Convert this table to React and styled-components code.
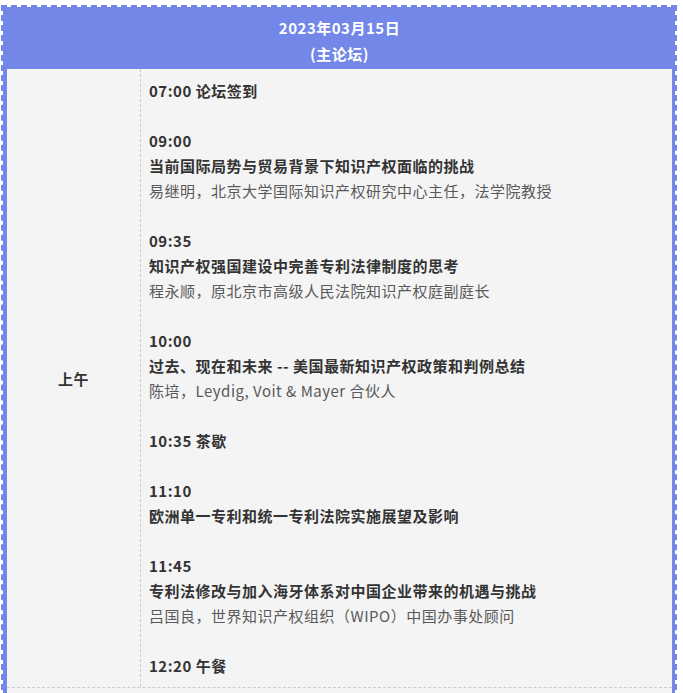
import React from 'react';
import styled, { createGlobalStyle } from 'styled-components';

const GlobalStyle = createGlobalStyle`
    body {
        margin: 0;
        background: #ffffff;
        font-family: "Noto Sans CJK SC", "Noto Sans", sans-serif;
    }
`;

const schedule = [
    { time: '07:00', title: '论坛签到', inline: true },
    { time: '09:00', title: '当前国际局势与贸易背景下知识产权面临的挑战', speaker: '易继明，北京大学国际知识产权研究中心主任，法学院教授' },
    { time: '09:35', title: '知识产权强国建设中完善专利法律制度的思考', speaker: '程永顺，原北京市高级人民法院知识产权庭副庭长' },
    { time: '10:00', title: '过去、现在和未来 -- 美国最新知识产权政策和判例总结', speaker: '陈培，Leydig, Voit & Mayer 合伙人' },
    { time: '10:35', title: '茶歇', inline: true },
    { time: '11:10', title: '欧洲单一专利和统一专利法院实施展望及影响' },
    { time: '11:45', title: '专利法修改与加入海牙体系对中国企业带来的机遇与挑战', speaker: '吕国良，世界知识产权组织（WIPO）中国办事处顾问' },
    { time: '12:20', title: '午餐', inline: true },
];

const App = () => {
    return (
        <>
            <GlobalStyle />
            <Frame>
                <Table>
                    <Header>
                        <HeaderLine>2023年03月15日</HeaderLine>
                        <HeaderLine>(主论坛)</HeaderLine>
                    </Header>
                    <Row>
                        <PeriodCell>上午</PeriodCell>
                        <AgendaCell>
                            {schedule.map((item, i) => (
                                <Block key={item.time} $last={i === schedule.length - 1}>
                                    {item.inline ? (
                                        <Line $bold>
                                            {item.time} {item.title}
                                        </Line>
                                    ) : (
                                        <>
                                            <Line $bold>{item.time}</Line>
                                            <Line $bold>{item.title}</Line>
                                            {item.speaker && <Line>{item.speaker}</Line>}
                                        </>
                                    )}
                                </Block>
                            ))}
                        </AgendaCell>
                    </Row>
                    <Spacer />
                </Table>
            </Frame>
        </>
    );
};

export default App;

const Frame = styled.div`
    margin: 5px 0 0 1px;
    width: 672px;
    border: 2px dashed #7287e8;
`;

const Table = styled.div`
    display: flex;
    flex-direction: column;
    background: #f4f4f4;
    border-left: 4px solid #7287e8;
    border-right: 3px solid #7287e8;
`;

const Header = styled.div`
    background: #7287e8;
    padding: 8px 0 2px;
    text-align: center;
`;

const HeaderLine = styled.div`
    color: #ffffff;
    font-size: 15px;
    font-weight: 700;
    line-height: 26px;
    letter-spacing: 0.5px;
`;

const Row = styled.div`
    display: flex;
    border-bottom: 1px dashed #cccccc;
`;

const PeriodCell = styled.div`
    width: 133px;
    flex: none;
    display: flex;
    align-items: center;
    justify-content: center;
    border-right: 1px dashed #cccccc;
    color: #333333;
    font-size: 15px;
    font-weight: 700;
    letter-spacing: 0.5px;
`;

const AgendaCell = styled.div`
    flex: 1;
    padding: 9px 8px 9px;
`;

const Block = styled.div`
    margin-bottom: ${(p) => (p.$last ? '0' : '25px')};
`;

const Line = styled.div`
    font-size: 15px;
    line-height: 25px;
    letter-spacing: 0.5px;
    font-weight: ${(p) => (p.$bold ? 700 : 400)};
    color: ${(p) => (p.$bold ? '#333333' : '#595959')};
    white-space: nowrap;
`;

const Spacer = styled.div`
    height: 40px;
`;
